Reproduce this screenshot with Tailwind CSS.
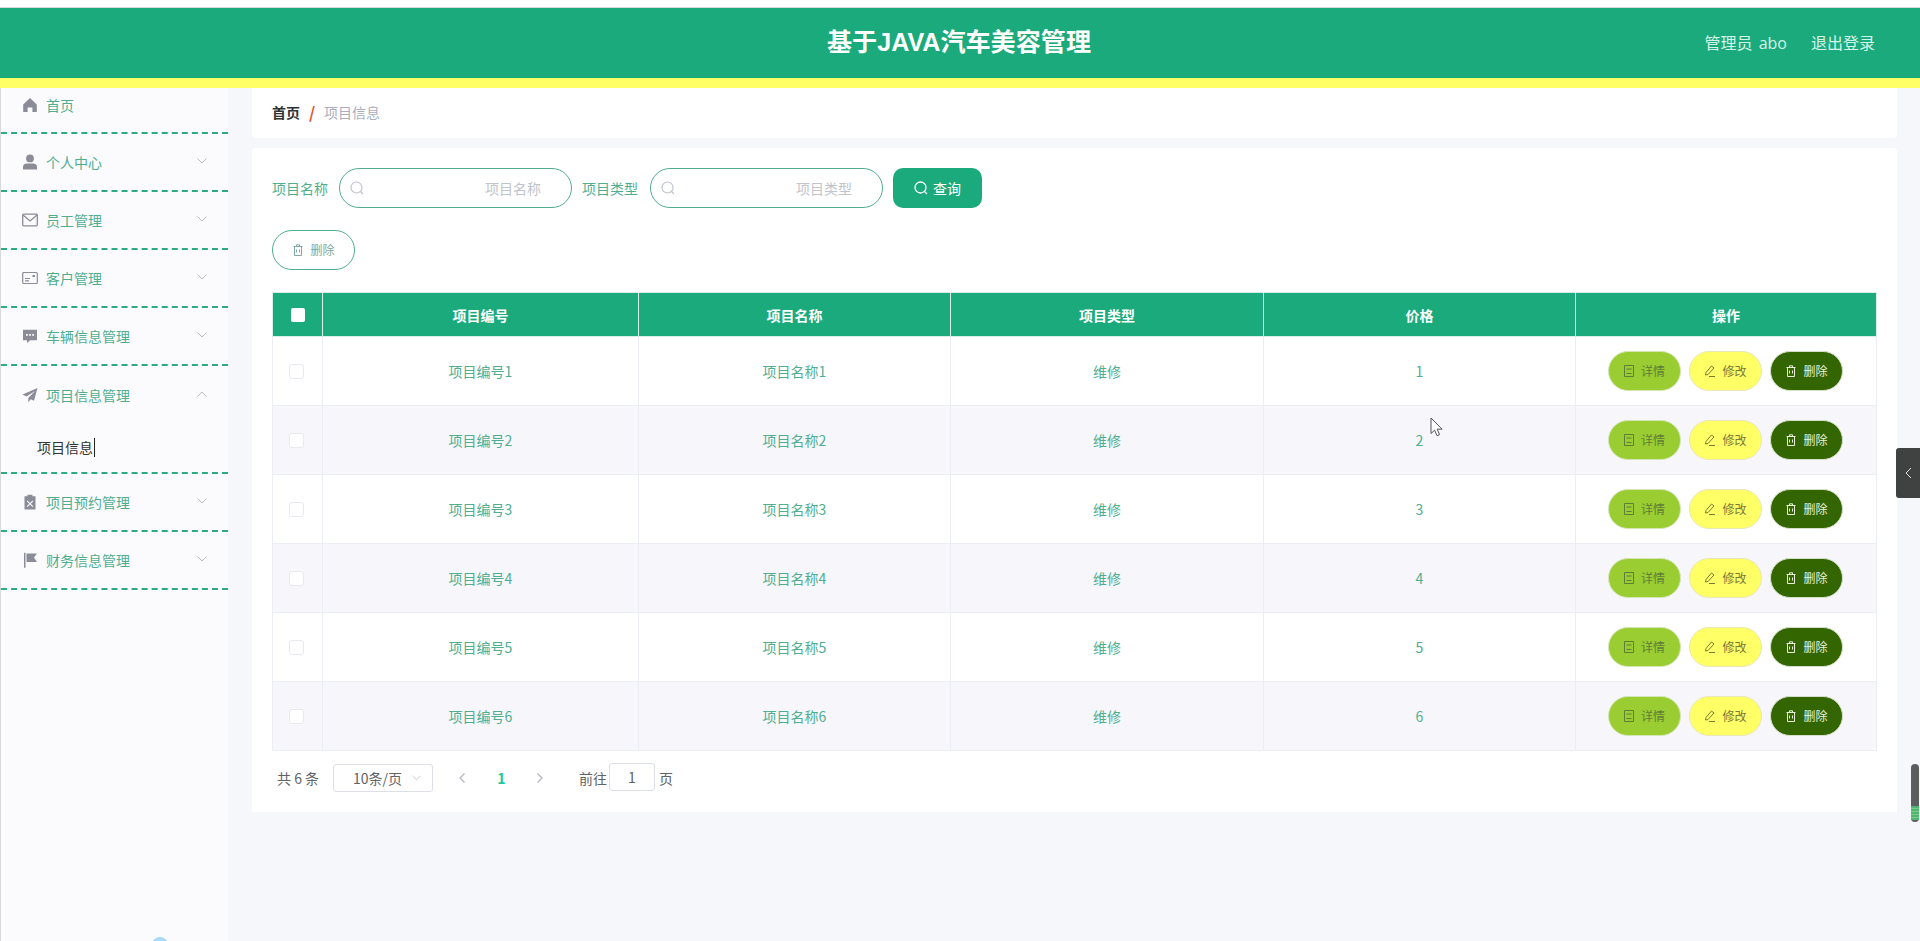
<!DOCTYPE html>
<html lang="zh-CN">
<head>
  <meta charset="UTF-8">
  <title>基于JAVA汽车美容管理</title>
  <script src="https://cdn.jsdelivr.net/npm/@tailwindcss/browser@4"></script>
</head>
<body class="h-[941px] overflow-hidden relative bg-[#f6f7fb] font-['Noto_Sans_CJK_SC','Noto_Sans',sans-serif] text-sm">

  <!-- Top strip + header -->
  <div class="h-2 bg-white border-b border-[#d5d8dc]"></div>
  <header class="h-[80px] bg-[#1baa7c] border-b-[10px] border-[#ffff66] flex items-center relative">
    <h1 class="flex-1 text-center text-white font-bold text-[25.1px] pr-[2px] font-['Liberation_Sans','Noto_Sans_CJK_SC',sans-serif]">基于JAVA汽车美容管理</h1>
    <div class="absolute right-[45px] top-0 h-[70px] flex items-center gap-6 text-[16px] text-[#d4f3e8] font-['Open_Sans','Noto_Sans_CJK_SC',sans-serif]">
      <span class="[word-spacing:2px]">管理员 abo</span>
      <span>退出登录</span>
    </div>
  </header>

  <div class="flex h-[853px]">
    <!-- Sidebar -->
    <aside class="w-[228px] shrink-0 bg-[#fbfbfe] border-l border-[#d8d8de] relative text-[#4fae90]">
      <div class="h-[46px] pb-[10px] border-b-2 border-dashed border-[#2bab82] flex items-center pl-[21px]">
        <svg class="w-4 h-4 mr-2 fill-[#8b8c98]" viewBox="0 0 16 16"><path d="M8 1 1.2 7.4V15h4.4v-4.6h4.8V15h4.4V7.4z"/></svg>
        <span>首页</span>
      </div>
      <div class="h-[58px] border-b-2 border-dashed border-[#2bab82] flex items-center pl-[21px]">
        <svg class="w-4 h-4 mr-2 fill-[#8b8c98]" viewBox="0 0 16 16"><circle cx="8" cy="4.4" r="3.9"/><path d="M1 15.5v-2.7C1 10.4 3 9.4 5 9.4h6c2 0 4 1 4 3.4v2.7z"/></svg>
        <span>个人中心</span>
        <svg class="w-[10px] h-[6px] ml-auto mr-[21px] mb-[2px] stroke-[#b9bcc6] fill-none" viewBox="0 0 10 6"><path d="M.5.5 5 5 9.500.5"/></svg>
      </div>
      <div class="h-[58px] border-b-2 border-dashed border-[#2bab82] flex items-center pl-[21px]">
        <svg class="w-4 h-4 mr-2 stroke-[#8b8c98] fill-none" stroke-width="1.3" viewBox="0 0 16 16"><rect x=".7" y="2.200" width="14.600" height="11.600" rx="1"/><path d="M1 3l7 6 7-6"/></svg>
        <span>员工管理</span>
        <svg class="w-[10px] h-[6px] ml-auto mr-[21px] mb-[2px] stroke-[#b9bcc6] fill-none" viewBox="0 0 10 6"><path d="M.5.5 5 5 9.500.5"/></svg>
      </div>
      <div class="h-[58px] border-b-2 border-dashed border-[#2bab82] flex items-center pl-[21px]">
        <svg class="w-4 h-4 mr-2 stroke-[#8b8c98] fill-none" stroke-width="1.200" viewBox="0 0 16 16"><rect x=".7" y="2.500" width="14.600" height="11" rx="1"/><path d="M3 8.500h5M3 10.800h4"/><rect x="10.500" y="5" width="2.500" height="2" fill="#8b8c98" stroke="none"/></svg>
        <span>客户管理</span>
        <svg class="w-[10px] h-[6px] ml-auto mr-[21px] mb-[2px] stroke-[#b9bcc6] fill-none" viewBox="0 0 10 6"><path d="M.5.5 5 5 9.500.5"/></svg>
      </div>
      <div class="h-[58px] border-b-2 border-dashed border-[#2bab82] flex items-center pl-[21px]">
        <svg class="w-4 h-4 mr-2 fill-[#8b8c98]" viewBox="0 0 16 16"><path fill-rule="evenodd" d="M1 1.800h14v10.400H8.200L5 15v-2.800H1zM4 6h1.800v1.800H4zm3.100 0h1.800v1.800H7.100zm3.100 0H12v1.800h-1.800z"/></svg>
        <span>车辆信息管理</span>
        <svg class="w-[10px] h-[6px] ml-auto mr-[21px] mb-[2px] stroke-[#b9bcc6] fill-none" viewBox="0 0 10 6"><path d="M.5.5 5 5 9.500.5"/></svg>
      </div>
      <div class="h-[108px] border-b-2 border-dashed border-[#2bab82]">
        <div class="h-[58px] flex items-center pl-[21px]">
          <svg class="w-4 h-4 mr-2 fill-[#8b8c98]" viewBox="0 0 16 16"><path d="M15.500 1 .5 7.600l4 2L13 4 6.300 11v4.200l2.600-3 3.100 1.600z"/></svg>
          <span>项目信息管理</span>
          <svg class="w-[10px] h-[6px] ml-auto mr-[21px] mb-[2px] stroke-[#b9bcc6] fill-none" viewBox="0 0 10 6"><path d="M.5 5.500 5 1l4.500 4.500"/></svg>
        </div>
        <div class="pl-[36px] h-[48px] pb-[2px] flex items-center text-[#333]">
          <span class="border-r border-[#222] leading-[19px] pr-px">项目信息</span>
        </div>
      </div>
      <div class="h-[58px] border-b-2 border-dashed border-[#2bab82] flex items-center pl-[21px]">
        <svg class="w-4 h-4 mr-2 fill-[#8b8c98]" viewBox="0 0 16 16"><path fill-rule="evenodd" d="M5.500.8h5v1.400h3V15.500h-11V2.200h3zM5.500 6.500l2.500 2.500 2.500-2.500.8.800L8.800 9.800l2.500 2.500-.8.800L8 10.600l-2.500 2.500-.8-.8 2.500-2.500-2.500-2.500z"/></svg>
        <span>项目预约管理</span>
        <svg class="w-[10px] h-[6px] ml-auto mr-[21px] mb-[2px] stroke-[#b9bcc6] fill-none" viewBox="0 0 10 6"><path d="M.5.5 5 5 9.500.5"/></svg>
      </div>
      <div class="h-[58px] border-b-2 border-dashed border-[#2bab82] flex items-center pl-[21px]">
        <svg class="w-4 h-4 mr-2 fill-[#8b8c98]" viewBox="0 0 16 16"><path d="M2 .8h1.500v15H2zM4.500 1.500H15l-3 4 3 4.500H4.500z"/></svg>
        <span>财务信息管理</span>
        <svg class="w-[10px] h-[6px] ml-auto mr-[21px] mb-[2px] stroke-[#b9bcc6] fill-none" viewBox="0 0 10 6"><path d="M.5.5 5 5 9.500.5"/></svg>
      </div>
      <!-- bit of a blue ball peeking in at the bottom -->
      <div class="absolute left-[151px] top-[849px] w-4 h-4 rounded-full bg-[#a8d8fb]"></div>
    </aside>

    <!-- Content -->
    <main class="flex-1 pl-6 pr-[23px]">
      <div class="h-[50px] pb-[2px] bg-white rounded-b flex items-center px-5">
        <span class="font-bold text-[#303133]">首页</span>
        <span class="mx-[9px] w-[6px] text-[16px] text-[#e0532f] font-bold">/</span>
        <span class="text-[#a9adbd]">项目信息</span>
      </div>

      <div class="mt-[10px] h-[664px] bg-white rounded-t px-5 pt-5">
        <!-- Search row -->
        <div class="flex items-center h-10">
          <label class="text-[#4fae90] w-[67px]">项目名称</label>
          <div class="relative w-[233px]">
            <svg class="absolute left-[11px] top-[13px] w-[14px] h-[14px] stroke-[#c0c4cc] fill-none" stroke-width="1.200" viewBox="0 0 14 14"><circle cx="6.500" cy="6.500" r="5.500"/><path d="m10.500 10.500 2.500 2.500"/></svg>
            <input class="w-full h-10 rounded-[20px] border border-[#4fae90] bg-white pl-[145px] outline-none text-sm placeholder:text-[#c0c4cc]" placeholder="项目名称">
          </div>
          <label class="text-[#4fae90] ml-[10px] w-[68px]">项目类型</label>
          <div class="relative w-[233px]">
            <svg class="absolute left-[11px] top-[13px] w-[14px] h-[14px] stroke-[#c0c4cc] fill-none" stroke-width="1.200" viewBox="0 0 14 14"><circle cx="6.500" cy="6.500" r="5.500"/><path d="m10.500 10.500 2.500 2.500"/></svg>
            <input class="w-full h-10 rounded-[20px] border border-[#4fae90] bg-white pl-[145px] outline-none text-sm placeholder:text-[#c0c4cc]" placeholder="项目类型">
          </div>
          <button class="ml-[10px] w-[89px] h-10 rounded-[10px] bg-[#1baa7c] text-white flex items-center justify-center gap-[5px]">
            <svg class="w-[14px] h-[14px] stroke-white fill-none" stroke-width="1.300" viewBox="0 0 14 14"><circle cx="6.500" cy="6.500" r="5.500"/><path d="m10.500 10.500 2.500 2.500"/></svg>
            查询
          </button>
        </div>

        <!-- Delete -->
        <button class="mt-[22px] w-[83px] h-10 rounded-[20px] border border-[#4fae90] bg-white text-[#7fa99a] text-xs flex items-center justify-center gap-[6px]">
          <svg class="w-3 h-3 stroke-[#7fa9a0] fill-none" viewBox="0 0 12 12"><path d="M2.500 2.500h7v9h-7zM1.500 2.500h9M4.500 2.500V.8h3v1.700M4.500 5.500v3M7.500 5.500v3"/></svg>
          删除
        </button>

        <!-- Table -->
        <table class="mt-[22px] w-[1604px] table-fixed border-collapse">
          <colgroup>
            <col class="w-[50px]"><col class="w-[316px]"><col class="w-[312px]"><col class="w-[313px]"><col class="w-[312px]"><col class="w-[301px]">
          </colgroup>
          <thead>
            <tr class="h-[44px] bg-[#1baa7c] text-white font-bold">
              <th class="border border-[#d9efe7]"><span class="block w-[14px] h-[14px] bg-white rounded-[2px] ml-[18px]"></span></th>
              <th class="border border-[#d9efe7]">项目编号</th>
              <th class="border border-[#d9efe7]">项目名称</th>
              <th class="border border-[#d9efe7]">项目类型</th>
              <th class="border border-[#d9efe7]">价格</th>
              <th class="border border-[#d9efe7]">操作</th>
            </tr>
          </thead>
          <tbody id="rows" class="text-[#4fae90] text-center"></tbody>
        </table>

        <!-- Pagination -->
        <div class="h-[52px] flex items-center text-sm text-[#606266] pl-[5px] pt-[2px]">
          <span class="w-[56px]">共 6 条</span>
          <div class="w-[100px] h-[28px] border border-[#dcdfe6] rounded-[3px] flex items-center pl-[19px] pr-2">
            <span>10条/页</span>
            <svg class="w-[9px] h-[6px] ml-auto mr-[3px] stroke-[#c0c4cc] fill-none" viewBox="0 0 10 6"><path d="M.5.5 5 5 9.500.5"/></svg>
          </div>
          <svg class="w-[6px] h-[10px] ml-[26px] stroke-[#b5b8c0] fill-none" stroke-width="1.300" viewBox="0 0 6 10"><path d="M5.500.5 1 5l4.500 4.500"/></svg>
          <span class="w-[33px] ml-5 font-bold text-[#1bc99a] text-center">1</span>
          <svg class="w-[6px] h-[10px] ml-[19px] stroke-[#b5b8c0] fill-none" stroke-width="1.300" viewBox="0 0 6 10"><path d="M.5.5 5 5 .5 9.500"/></svg>
          <span class="ml-[36px]">前往</span>
          <input class="ml-[2px] w-[46px] h-[28px] mb-[2px] border border-[#dcdfe6] rounded-[3px] text-center outline-none" value="1">
          <span class="ml-[4px]">页</span>
        </div>
      </div>
    </main>
  </div>

  <!-- Floating tab on the right edge -->
  <div class="absolute right-0 top-[448px] w-6 h-[50px] bg-[#404241] rounded-l-[3px] flex items-center justify-center">
    <svg class="w-[7px] h-3 stroke-[#dfe3e0] fill-none" viewBox="0 0 7 12"><path d="M6 1 1 6l5 5"/></svg>
  </div>

  <!-- Scroll handle -->
  <div class="absolute left-[1911px] top-[764px] w-2 h-[58px] rounded bg-[#5b5d5f] overflow-hidden">
    <div class="mt-[42px] h-[14px] bg-[repeating-linear-gradient(to_bottom,#4fb56f_0,#4fb56f_2px,#7cc98e_2px,#7cc98e_3px)]"></div>
  </div>

  <!-- Mouse pointer -->
  <svg class="absolute left-[1430px] top-[417px] w-[13px] h-5" viewBox="0 0 13 20"><path d="M1 1v15.500l3.600-3.300 2.400 5.500 2.600-1.100-2.400-5.400h4.900z" fill="#fff" stroke="#555"/></svg>

  <script>
    var rowsEl = document.getElementById('rows');
    var html = '';
    for (var i = 1; i <= 6; i++) {
      var bg = i % 2 === 0 ? 'bg-[#f6f6fb]' : 'bg-white';
      html += '<tr class="h-[69px] ' + bg + '">'
        + '<td class="border border-[#ebeef5]"><span class="block w-[15px] h-[15px] bg-white border border-[#e8e9ef] rounded-[3px] ml-[16px]"></span></td>'
        + '<td class="border border-[#ebeef5]">项目编号' + i + '</td>'
        + '<td class="border border-[#ebeef5]">项目名称' + i + '</td>'
        + '<td class="border border-[#ebeef5]">维修</td>'
        + '<td class="border border-[#ebeef5]">' + i + '</td>'
        + '<td class="border border-[#ebeef5]"><div class="flex pl-[32px] gap-[8px] text-xs">'
        + '<button class="w-[73px] h-10 rounded-[20px] bg-[#9acd32] border border-[#d5e5b5] text-[#5e7d35] flex items-center justify-center gap-[7px]"><svg class="w-[10px] h-3 stroke-[#5e7d35] fill-none" viewBox="0 0 10 12"><path d="M.5.5h9v11h-9zM2.500 4h5M2.500 8.500h5"/></svg>详情</button>'
        + '<button class="w-[73px] h-10 rounded-[20px] bg-[#ffff66] border border-[#e8e8b8] text-[#7a7a3a] flex items-center justify-center gap-[6px]"><svg class="w-3 h-3 stroke-[#7a7a3a] fill-none" viewBox="0 0 12 12"><path d="M7.500 1 10 3 4 9.500 1.500 10 2 7.500zM5 11.500h6"/></svg>修改</button>'
        + '<button class="w-[73px] h-10 rounded-[20px] bg-[#336600] border border-[#d5dfc8] text-[#e8f0dc] flex items-center justify-center gap-[6px]"><svg class="w-3 h-3 stroke-[#e8f0dc] fill-none" viewBox="0 0 12 12"><path d="M2.500 2.500h7v9h-7zM1.500 2.500h9M4.500 2.500V.8h3v1.700M4.500 5.500v3M7.500 5.500v3"/></svg>删除</button>'
        + '</div></td></tr>';
    }
    rowsEl.innerHTML = html;
  </script>
</body>
</html>
